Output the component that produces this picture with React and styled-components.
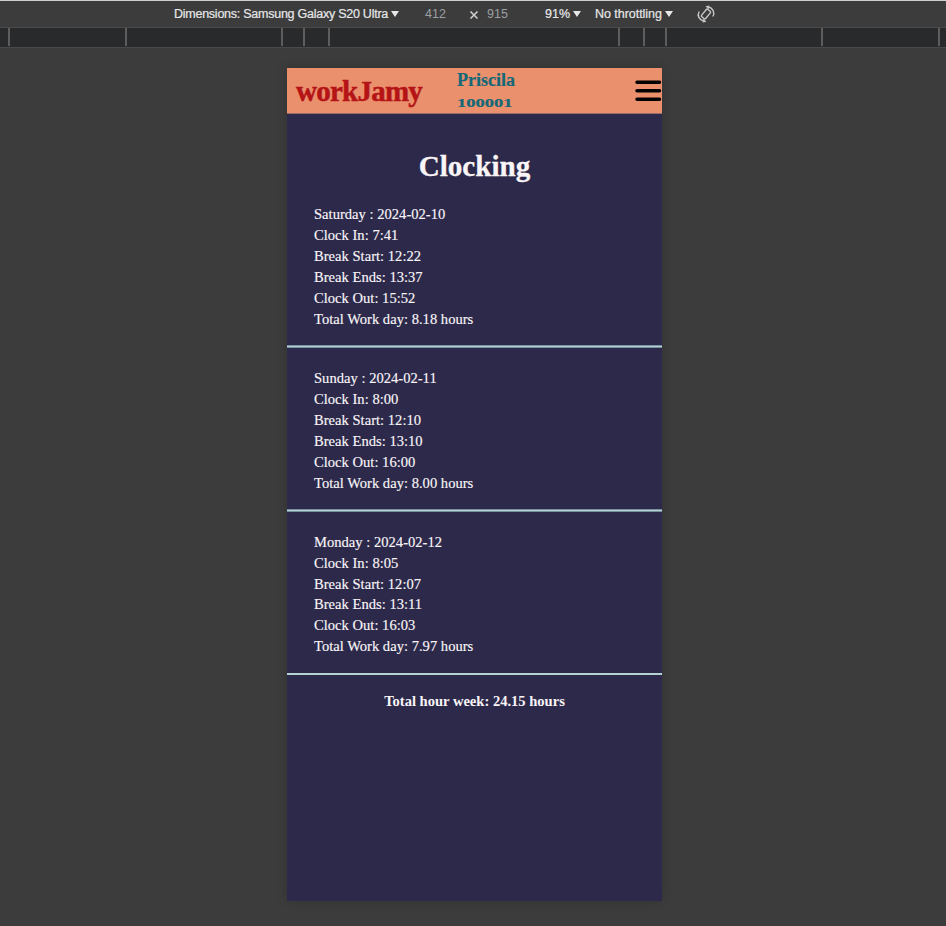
import React from "react";
import styled, { createGlobalStyle } from "styled-components";

const Global = createGlobalStyle`
  *, *::before, *::after { box-sizing: border-box; }
  body { margin: 0; background: #3c3c3c; }
`;

const Page = styled.div`
  width: 946px;
  height: 926px;
  overflow: hidden;
  background: #3c3c3c;
  display: flex;
  flex-direction: column;
`;

const Toolbar = styled.div`
  flex: none;
  height: 28px;
  border-top: 1px solid #ccd1cf;
  border-bottom: 1px solid #4a4a4b;
  padding-left: 174px;
  display: flex;
  align-items: center;
  font: 12.5px/16px "Liberation Sans", Arial, sans-serif;
  color: #e6e7e8;
  white-space: nowrap;
`;

const Field = styled.div`
  flex: none;
  width: ${(p) => p.$width}px;
  color: ${(p) => (p.$muted ? "#9b9fa3" : "#e6e7e8")};
  letter-spacing: ${(p) => p.$spacing || 0}px;
  -webkit-text-stroke: ${(p) => (p.$muted ? 0 : 0.2)}px currentColor;
  display: flex;
  align-items: center;
`;

const Caret = styled.span`
  margin: -1px 0 0 3px;
  border: 4px solid transparent;
  border-top: 6px solid #e6e7e8;
  border-bottom: 0;
`;

const Ruler = styled.div`
  flex: none;
  height: 20px;
  background: #292a2c;
  border-bottom: 1px solid #4a4a4b;
  display: flex;
`;

const Tick = styled.span`
  flex: none;
  width: 2px;
  height: 18px;
  margin-left: ${(p) => p.$gap}px;
  background: #5e5e5e;
`;

const Device = styled.main`
  flex: none;
  width: 375px;
  height: 833px;
  margin: 20px 0 0 287px;
  background: #2c294b;
  box-shadow: 0 0 10px rgba(0, 0, 0, 0.18);
  color: #faf5f7;
  font-family: "Liberation Serif", "Times New Roman", serif;
`;

const Header = styled.header`
  height: 46px;
  background: #eb906d;
  border-bottom: 1px solid #9a6b64;
  display: flex;
  align-items: center;
`;

const Brand = styled.div`
  width: 170px;
  padding: 1px 0 0 9px;
  font-size: 29px;
  line-height: 40px;
  font-weight: 700;
  letter-spacing: -0.75px;
  -webkit-text-stroke: 0.5px currentColor;
  color: #b51416;
  white-space: nowrap;
`;

const User = styled.div`
  flex: 1;
  padding-top: 2px;
  font-size: 18px;
  line-height: 23px;
  font-weight: 700;
  -webkit-text-stroke: 0.2px currentColor;
  color: #146878;
`;

const Code = styled.div`
  font-size: 13.5px;
  line-height: 22px;
  transform: scaleX(1.37);
  transform-origin: left;
`;

const Title = styled.h1`
  margin: 36px 0 0;
  font-size: 29.12px;
  line-height: 33px;
  text-align: center;
  -webkit-text-stroke: 0.3px currentColor;
`;

const Day = styled.section`
  height: ${(p) => p.$height}px;
  padding-top: ${(p) => p.$top}px;
  display: flex;
  flex-direction: column;
  justify-content: space-between;
  font-size: 14.56px;
  line-height: 20.93px;
`;

const Entries = styled.div`
  padding-left: 27px;
  letter-spacing: 0.02px;
  -webkit-text-stroke: 0.15px currentColor;
`;

const Rule = styled.div`
  height: ${(p) => (p.$crisp ? 2 : 3)}px;
  background: #b4d3d2;
  border: solid #778f9f;
  border-width: ${(p) => (p.$crisp ? "0" : "1px 0")};
`;

const Total = styled.p`
  margin: 16px 0 0;
  font-size: 14.56px;
  line-height: 20px;
  font-weight: 700;
  text-align: center;
`;

const days = [
  { date: "Saturday : 2024-02-10", times: ["7:41", "12:22", "13:37", "15:52"], hours: "8.18", height: 165, top: 21.4 },
  { date: "Sunday : 2024-02-11", times: ["8:00", "12:10", "13:10", "16:00"], hours: "8.00", height: 164, top: 20.2 },
  { date: "Monday : 2024-02-12", times: ["8:05", "12:07", "13:11", "16:03"], hours: "7.97", height: 163, top: 19.67 },
];
const labels = ["Clock In", "Break Start", "Break Ends", "Clock Out"];
const ticks = [8, 115, 154, 20, 23, 288, 23, 20, 154, 115];

export default function App() {
  return (
    <Page>
      <Global />
      <Toolbar>
        <Field $width={251} $spacing={-0.25}>Dimensions: Samsung Galaxy S20 Ultra<Caret /></Field>
        <Field $width={44} $muted>412</Field>
        <Field $width={18}>
          <svg width="10" height="12" viewBox="0 0 10 12" stroke="#c9cbcd" strokeWidth="1.7"><path d="M1.500 3.500l7 7M8.500 3.500l-7 7" /></svg>
        </Field>
        <Field $width={58} $muted>915</Field>
        <Field $width={50}>91%<Caret /></Field>
        <Field $width={101} $spacing={-0.04}>No throttling<Caret /></Field>
        <svg width="20" height="20" viewBox="0 0 20 20" fill="none" stroke="#c5c7c9" strokeWidth="1.4">
          <rect x="7.4" y="5.2" width="5.2" height="9.600" rx="1.200" transform="rotate(40 10 10)" />
          <path d="M3.200 7.500C.8 11.500 3 16 8 17.200M16.800 12.500C19.200 8.500 17 4 12 2.800" />
          <path d="M7.500 14.800l3 3-4 .7zM12.500 5.200l-3-3 4-.7z" fill="#c5c7c9" stroke="none" />
        </svg>
      </Toolbar>
      <Ruler>{ticks.map((gap, i) => <Tick key={i} $gap={gap} />)}</Ruler>
      <Device>
        <Header>
          <Brand>workJamy</Brand>
          <User>Priscila<Code>100001</Code></User>
          <svg width="27" height="24" viewBox="0 0 27 24" stroke="#000" strokeWidth="3.500" strokeLinecap="round"><path d="M2 3.300h22.500M2 11.800h22.500M2 20.300h22.500" /></svg>
        </Header>
        <Title>Clocking</Title>
        {days.map((day, i) => (
          <Day key={day.date} $height={day.height} $top={day.top}>
            <Entries>
              <div>{day.date}</div>
              {labels.map((label, n) => <div key={label}>{label}: {day.times[n]}</div>)}
              <div>Total Work day: {day.hours} hours</div>
            </Entries>
            <Rule $crisp={i === 2} />
          </Day>
        ))}
        <Total>Total hour week: 24.15 hours</Total>
      </Device>
    </Page>
  );
}
